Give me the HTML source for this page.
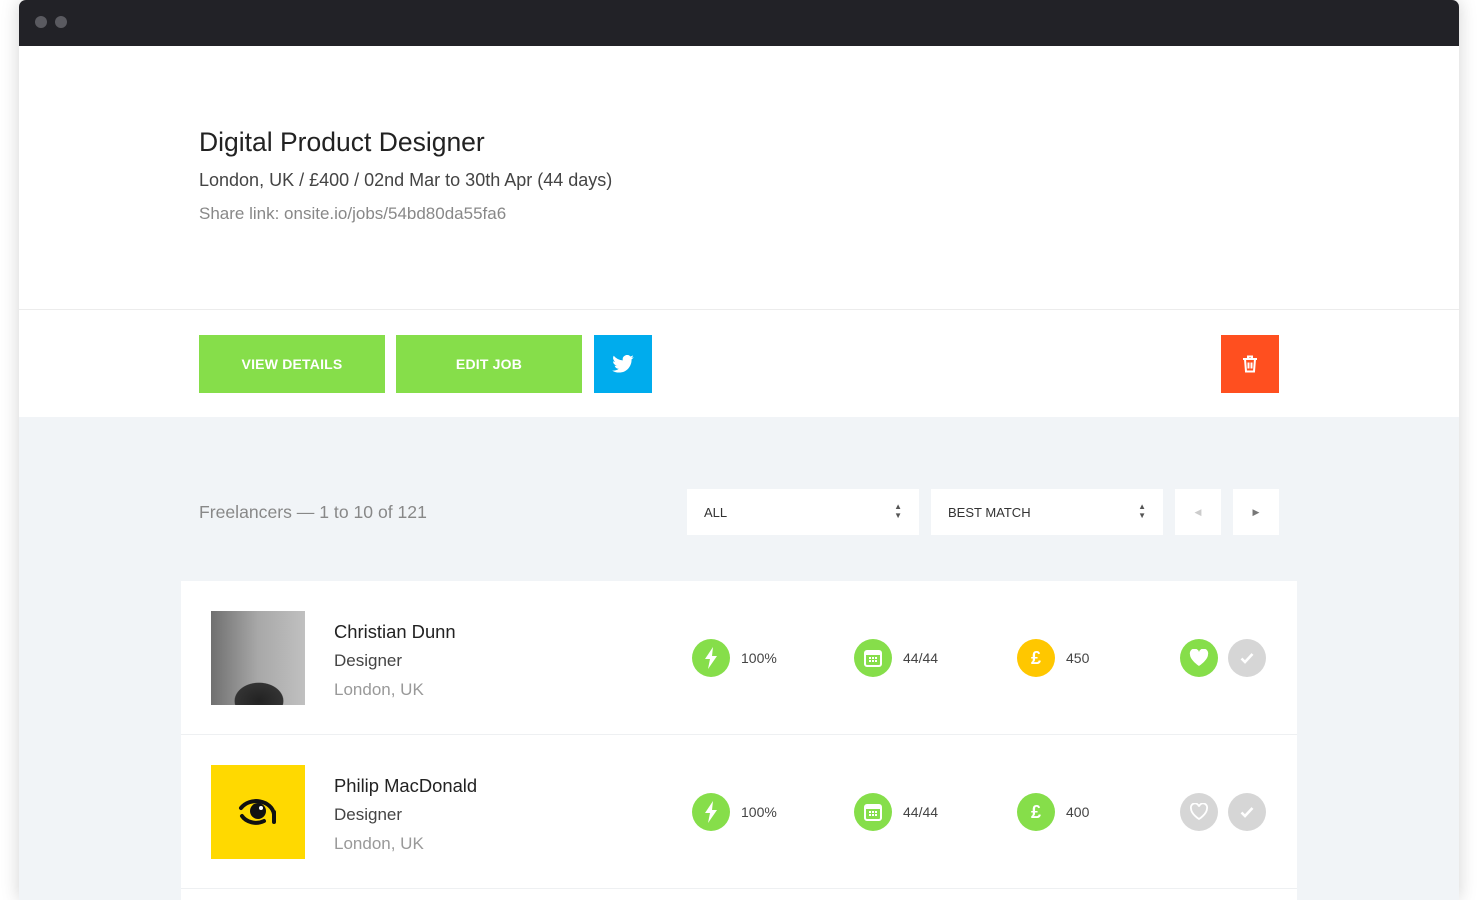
<!DOCTYPE html>
<html><head><meta charset="utf-8"><style>
*{box-sizing:border-box;margin:0;padding:0}
body{width:1478px;height:890px;background:#fff;font-family:"Liberation Sans",sans-serif;position:relative;overflow:hidden}
.win{position:absolute;left:19px;top:0;width:1440px;height:900px;box-shadow:0 0 18px rgba(0,0,0,.18);border-radius:7px 7px 0 0;overflow:hidden;background:#fff}
.bar{height:46px;background:#222227;position:relative}
.dot{position:absolute;top:16px;width:12px;height:12px;border-radius:50%;background:#5a5a60}
.a{position:absolute}
.hdr{left:0;top:46px;width:1440px;height:264px;background:#fff;border-bottom:1px solid #ececec}
.gray{left:0;top:417px;width:1440px;height:500px;background:#f1f4f7}
.btn{position:absolute;top:335px;height:58px;background:#86de4a;color:#fff;font-size:14px;font-weight:bold;display:flex;align-items:center;justify-content:center;letter-spacing:.2px}
.sel{position:absolute;top:489px;height:46px;background:#fff;font-size:13px;color:#333;display:flex;align-items:center;padding-left:17px}
.card{left:162px;top:581px;width:1116px;height:320px;background:#fff}
.row{position:absolute;left:0;width:1116px;height:154px;border-bottom:1px solid #eef0f2}
.nm{position:absolute;left:153px;font-size:18.4px;color:#222}
.sub{position:absolute;left:153px;font-size:17px}
.c{position:absolute;width:38px;height:38px;border-radius:50%;display:flex;align-items:center;justify-content:center}
.v{position:absolute;font-size:14px;color:#444}
</style></head><body>
<div class="win">
<div class="bar"><div class="dot" style="left:16px"></div><div class="dot" style="left:36px"></div></div>
<div class="a hdr"></div>
<div class="a" style="left:180px;top:127px;font-size:26.5px;color:#222">Digital Product Designer</div>
<div class="a" style="left:180px;top:170px;font-size:18px;color:#444">London, UK / £400 / 02nd Mar to 30th Apr (44 days)</div>
<div class="a" style="left:180px;top:204px;font-size:17px;color:#888">Share link: onsite.io/jobs/54bd80da55fa6</div>
<div class="btn" style="left:180px;width:186px">VIEW DETAILS</div>
<div class="btn" style="left:377px;width:186px">EDIT JOB</div>
<div class="btn" style="left:575px;width:58px;background:#00aced"><svg width="22" height="18" viewBox="0 0 24 20"><path fill="#fff" d="M24 2.4a9.8 9.8 0 0 1-2.8.8A4.9 4.9 0 0 0 23.3.4a9.9 9.9 0 0 1-3.1 1.2A4.9 4.9 0 0 0 11.8 6 14 14 0 0 1 1.7.9a4.9 4.9 0 0 0 1.5 6.6 4.9 4.9 0 0 1-2.2-.6 4.9 4.9 0 0 0 3.9 4.9 4.9 4.9 0 0 1-2.2.1 4.9 4.9 0 0 0 4.6 3.4A9.900 9.9 0 0 1 0 17.3 14 14 0 0 0 7.5 19.5c9.1 0 14-7.5 14-14v-.6A10 10 0 0 0 24 2.4z"/></svg></div>
<div class="btn" style="left:1202px;width:58px;background:#ff4f1f"><svg width="16" height="18" viewBox="0 0 16 18"><path d="M1 4h14M6 4V1.5h4V4M3 4l1 12.5h8L13 4M6.5 7.5v6M9.5 7.5v6" stroke="#fff" stroke-width="2" fill="none"/></svg></div>
<div class="a gray"></div>
<div class="a" style="left:180px;top:502px;font-size:17.6px;color:#888">Freelancers — 1 to 10 of 121</div>
<div class="sel" style="left:668px;width:232px">ALL<span style="position:absolute;right:17px;top:13px;font-size:8px;line-height:9px;color:#555">▲<br>▼</span></div>
<div class="sel" style="left:912px;width:232px">BEST MATCH<span style="position:absolute;right:17px;top:13px;font-size:8px;line-height:9px;color:#555">▲<br>▼</span></div>
<div class="sel" style="left:1156px;width:46px;padding:0;justify-content:center;color:#ccc;font-size:9px">◀</div>
<div class="sel" style="left:1214px;width:46px;padding:0;justify-content:center;color:#777;font-size:9px">▶</div>
<div class="a card">
 <div class="row" style="top:0">
  <div class="a" style="left:30px;top:30px;width:94px;height:94px;background:radial-gradient(ellipse 40px 30px at 48px 90px,#222 0,#333 60%,transparent 62%),linear-gradient(90deg,#707070,#a8a8a8 50%,#c0c0c0)"></div>
  <div class="nm" style="top:40px">Christian Dunn</div>
  <div class="sub" style="top:70px;color:#444">Designer</div>
  <div class="sub" style="top:99px;color:#999">London, UK</div>
 </div>
 <div class="row" style="top:154px">
  <div class="a" style="left:30px;top:30px;width:94px;height:94px;background:#ffd900;display:flex;align-items:center;justify-content:center"><svg width="44" height="36" viewBox="0 0 44 36"><path d="M5 14A18 15 0 0 1 38 20M6 22c4 6 14 9 22 5M38 18v10" stroke="#111" stroke-width="4" fill="none" stroke-linecap="round"/><circle cx="22" cy="17" r="8" fill="#111"/><circle cx="25" cy="14" r="2" fill="#fff"/></svg></div>
  <div class="nm" style="top:40px">Philip MacDonald</div>
  <div class="sub" style="top:70px;color:#444">Designer</div>
  <div class="sub" style="top:99px;color:#999">London, UK</div>
 </div>
</div>
</div>
<div class="c" style="left:692px;top:639px;background:#86de4a"><svg width="14" height="22" viewBox="0 0 14 22"><path d="M9 0L1 12h5l-2 10 9-13H8z" fill="#fff"/></svg></div>
<div class="v" style="left:741px;top:650px">100%</div>
<div class="c" style="left:854px;top:639px;background:#86de4a"><svg width="20" height="20" viewBox="0 0 20 20"><rect x="2" y="3" width="16" height="15" rx="2" fill="none" stroke="#fff" stroke-width="2"/><rect x="2" y="3" width="16" height="4" fill="#fff"/><g fill="#fff"><rect x="6" y="9" width="2" height="2"/><rect x="9" y="9" width="2" height="2"/><rect x="12" y="9" width="2" height="2"/><rect x="6" y="12" width="2" height="2"/><rect x="9" y="12" width="2" height="2"/><rect x="12" y="12" width="2" height="2"/></g></svg></div>
<div class="v" style="left:903px;top:650px">44/44</div>
<div class="c" style="left:1017px;top:639px;background:#ffc700;color:#fff;font-weight:bold;font-size:18px">£</div>
<div class="v" style="left:1066px;top:650px">450</div>
<div class="c" style="left:1180px;top:639px;background:#86de4a"><svg width="20" height="18" viewBox="0 0 20 18"><path d="M10 17S1 11 1 5.5A4.5 4.5 0 0 1 10 3a4.5 4.5 0 0 1 9 2.5C19 11 10 17 10 17z" fill="#fff"/></svg></div>
<div class="c" style="left:1228px;top:639px;background:#d6d6d6"><svg width="14" height="12" viewBox="0 0 14 12"><path d="M1.5 6.5l3.5 3.5 7.5-8" stroke="#fff" stroke-width="2.6" fill="none"/></svg></div>

<div class="c" style="left:692px;top:793px;background:#86de4a"><svg width="14" height="22" viewBox="0 0 14 22"><path d="M9 0L1 12h5l-2 10 9-13H8z" fill="#fff"/></svg></div>
<div class="v" style="left:741px;top:804px">100%</div>
<div class="c" style="left:854px;top:793px;background:#86de4a"><svg width="20" height="20" viewBox="0 0 20 20"><rect x="2" y="3" width="16" height="15" rx="2" fill="none" stroke="#fff" stroke-width="2"/><rect x="2" y="3" width="16" height="4" fill="#fff"/><g fill="#fff"><rect x="6" y="9" width="2" height="2"/><rect x="9" y="9" width="2" height="2"/><rect x="12" y="9" width="2" height="2"/><rect x="6" y="12" width="2" height="2"/><rect x="9" y="12" width="2" height="2"/><rect x="12" y="12" width="2" height="2"/></g></svg></div>
<div class="v" style="left:903px;top:804px">44/44</div>
<div class="c" style="left:1017px;top:793px;background:#86de4a;color:#fff;font-weight:bold;font-size:18px">£</div>
<div class="v" style="left:1066px;top:804px">400</div>
<div class="c" style="left:1180px;top:793px;background:#d6d6d6"><svg width="20" height="18" viewBox="0 0 20 18"><path d="M10 16S2 11 2 5.5A4 4 0 0 1 10 3.5a4 4 0 0 1 8 2C18 11 10 16 10 16z" fill="none" stroke="#fff" stroke-width="1.8"/></svg></div>
<div class="c" style="left:1228px;top:793px;background:#d6d6d6"><svg width="14" height="12" viewBox="0 0 14 12"><path d="M1.5 6.5l3.5 3.5 7.5-8" stroke="#fff" stroke-width="2.6" fill="none"/></svg></div>
</body></html>
